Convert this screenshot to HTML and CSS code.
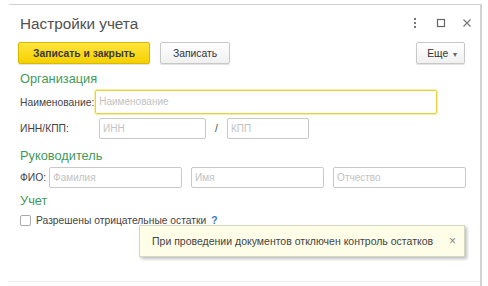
FILE: index.html
```html
<!DOCTYPE html>
<html lang="ru">
<head>
<meta charset="utf-8">
<link rel="stylesheet" href="styles.css">
</head>
<body>
<div class="window">
  <div class="header">
    <div class="title">Настройки учета</div>
    <div class="win-icons">
      <svg class="ico" width="10" height="12" viewBox="0 0 10 12"><rect x="4" y="1" width="2" height="2" fill="#777"/><rect x="4" y="5" width="2" height="2" fill="#777"/><rect x="4" y="9" width="2" height="2" fill="#777"/></svg>
      <svg class="ico" width="10" height="12" viewBox="0 0 10 12"><rect x="1.5" y="2.5" width="7" height="7" fill="none" stroke="#666" stroke-width="1.2"/></svg>
      <svg class="ico" width="10" height="12" viewBox="0 0 10 12"><path d="M1.5 2.5 L8.5 9.5 M8.5 2.5 L1.5 9.5" stroke="#777" stroke-width="1.2"/></svg>
    </div>
  </div>
  <div class="toolbar">
    <button class="btn btn-default">Записать и закрыть</button>
    <button class="btn">Записать</button>
    <div class="spacer"></div>
    <button class="btn btn-more">Еще <span class="caret">▾</span></button>
  </div>
  <div class="group">Организация</div>
  <div class="row row-name">
    <span class="label">Наименование:</span>
    <div class="input input-focus">Наименование</div>
  </div>
  <div class="row row-inn">
    <span class="label label-inn">ИНН/КПП:</span>
    <div class="input input-inn">ИНН</div>
    <span class="slash">/</span>
    <div class="input input-kpp">КПП</div>
  </div>
  <div class="group group-2">Руководитель</div>
  <div class="row row-fio">
    <span class="label">ФИО:</span>
    <div class="input input-fio">Фамилия</div>
    <div class="input input-fio">Имя</div>
    <div class="input input-fio">Отчество</div>
  </div>
  <div class="group group-3">Учет</div>
  <div class="row row-check">
    <span class="checkbox"></span>
    <span class="check-label">Разрешены отрицательные остатки</span>
    <span class="help">?</span>
  </div>
  <div class="footer-line"></div>
  <div class="tooltip">
    <span>При проведении документов отключен контроль остатков</span>
    <span class="tip-close">×</span>
  </div>
</div>
</body>
</html>
```
FILE: styles.css
```css
html, body {
  margin: 0;
  padding: 0;
  background: #fff;
}
body {
  font-family: "Liberation Sans", Arial, sans-serif;
  font-size: 10.3px;
  color: #444;
  width: 488px;
  height: 286px;
  overflow: hidden;
}
.window {
  position: relative;
  margin: 4px 0 0 9px;
  width: 473px;
  height: 282px;
  border-top: 1px solid #d0d0d0;
  border-right: 2px solid #d4d4d4;
  padding-left: 11px;
  box-sizing: border-box;
  display: flex;
  flex-direction: column;
}
.header {
  height: 32px;
  display: flex;
  align-items: center;
  justify-content: space-between;
  padding-right: 8px;
}
.title {
  font-size: 15.3px;
  color: #505050;
  margin-top: 5px;
}
.win-icons {
  display: flex;
  gap: 16px;
  margin-top: 3px;
}
.ico { display: block; }
.toolbar {
  margin-top: 5px;
  height: 22px;
  display: flex;
  align-items: stretch;
  gap: 10px;
  padding-right: 15px;
}
.spacer { flex: 1; }
.btn {
  font-family: inherit;
  font-size: 10.3px;
  color: #333;
  background: linear-gradient(#ffffff, #f0f0f0);
  border: 1px solid #c8c8c8;
  border-radius: 2px;
  padding: 0 12px;
  box-shadow: 0 1px 1px rgba(0,0,0,0.12);
  margin: 0;
}
.btn-default {
  background: linear-gradient(#ffe53d, #f5d000);
  border-color: #d9b800;
  font-weight: bold;
  color: #3a3a3a;
  padding: 0 14px;
  margin-left: -2px;
}
.btn-more { padding: 0 7px 0 10px; }
.caret { font-size: 8px; color: #666; margin-left: 2px; }
.group {
  margin-top: 6px;
  height: 18px;
  font-size: 12.8px;
  color: #3f9a5c;
  line-height: 18px;
}
.group-2 { margin-top: 8px; }
.group-3 { margin-top: 4px; }
.row {
  display: flex;
  align-items: center;
}
.label { color: #444; }
.input {
  box-sizing: border-box;
  height: 21px;
  border: 1px solid #c9c9c9;
  border-radius: 2px;
  color: #c2c2c2;
  font-size: 10px;
  line-height: 19px;
  padding-left: 3px;
}
.row-name { height: 24px; margin-top: 2px; }
.input-focus {
  height: 24px;
  width: 342px;
  margin-left: 1px;
  border: 1px solid #e6d23c;
  box-shadow: 0 0 0 1px #f8efa6;
  line-height: 22px;
}
.row-inn { margin-top: 4px; height: 21px; }
.label-inn { width: 79px; }
.input-inn { width: 107px; }
.slash { width: 21px; text-align: center; }
.input-kpp { width: 82px; }
.row-fio { margin-top: 2px; height: 21px; gap: 9px; }
.row-fio .label { margin-right: -6px; }
.input-fio { width: 133px; }
.row-check { margin-top: 3px; height: 14px; }
.checkbox {
  width: 11px;
  height: 11px;
  border: 1px solid #aaa;
  border-radius: 2px;
  box-sizing: border-box;
  margin-right: 5px;
}
.check-label { color: #444; }
.help {
  color: #3a78c4;
  font-weight: bold;
  margin-left: 5px;
}
.footer-line {
  position: absolute;
  left: 0;
  right: 0;
  top: 276px;
  border-top: 1px solid #ececec;
}
.tooltip {
  position: absolute;
  left: 130px;
  top: 220px;
  width: 326px;
  height: 32px;
  box-sizing: border-box;
  background: #fdfde8;
  border: 1px solid #d6d6c4;
  box-shadow: 2px 2px 3px rgba(0,0,0,0.25);
  display: flex;
  align-items: center;
  padding-left: 12px;
  font-size: 10.5px;
  color: #444;
}
.tip-close {
  margin-left: 16px;
  color: #888;
  font-size: 12px;
}
```
